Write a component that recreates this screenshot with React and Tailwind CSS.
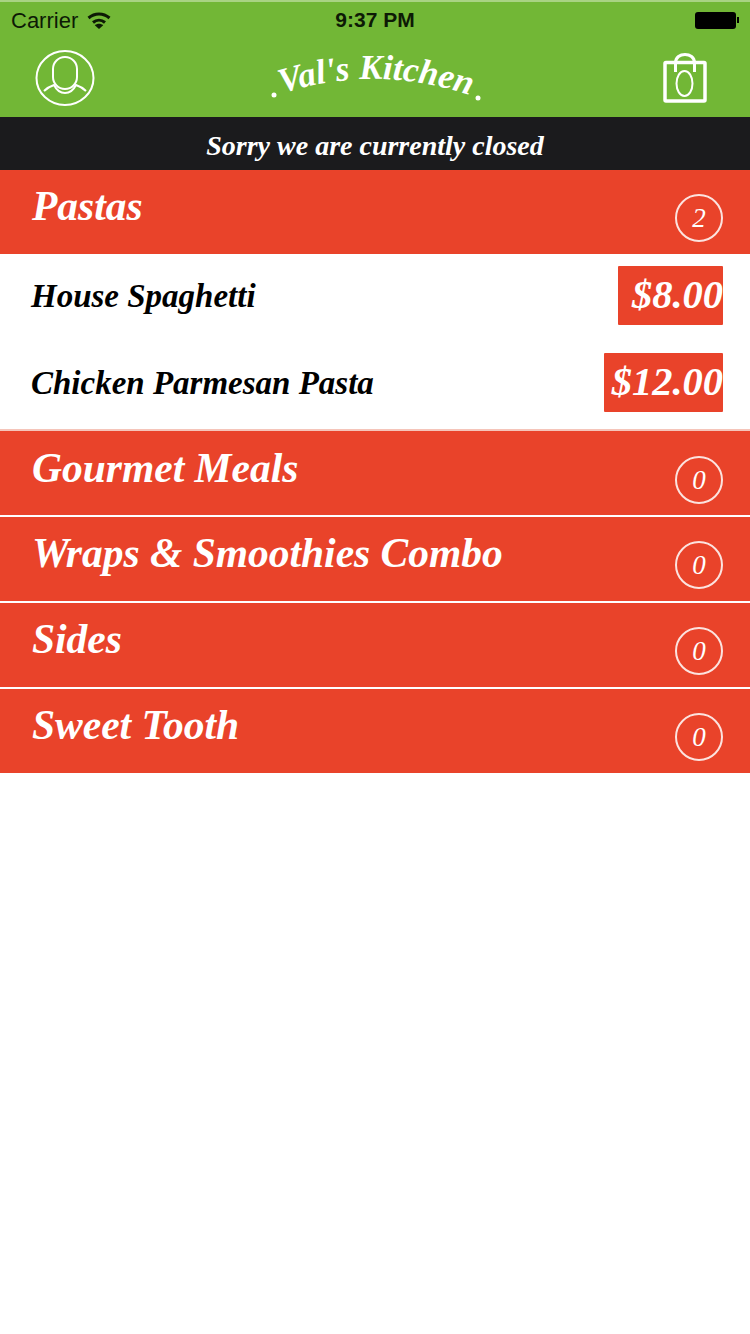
import React from 'react';

const scriptFont = "font-['Liberation_Serif',serif] italic font-bold";

const categories = [
  { name: 'Gourmet Meals', count: 0 },
  { name: 'Wraps & Smoothies Combo', count: 0 },
  { name: 'Sides', count: 0 },
  { name: 'Sweet Tooth', count: 0 },
];

const dishes = [
  { name: 'House Spaghetti', price: '$8.00', width: 'w-[105px]' },
  { name: 'Chicken Parmesan Pasta', price: '$12.00', width: 'w-[119px]' },
];

const WifiIcon = () => (
  <svg width="24" height="17" viewBox="0 0 24 17" fill="none" stroke="#0d1a05" strokeWidth="3">
    <path d="M1.5 6C7.8 0.6 16.2 0.6 22.5 6" />
    <path d="M6 10.5C9.6 7.4 14.4 7.4 18 10.5" />
    <path d="M12 17L7.8 13.2C10.2 11.2 13.8 11.2 16.2 13.2Z" fill="#0d1a05" stroke="none" />
  </svg>
);

const Battery = () => (
  <div className="flex items-center gap-px">
    <div className="w-[41px] h-[17px] bg-black rounded-[3px]" />
    <div className="w-[2px] h-[6px] bg-black" />
  </div>
);

const ProfileIcon = () => (
  <svg width="60" height="56" viewBox="0 0 60 56" fill="none" stroke="white" strokeWidth="2">
    <ellipse cx="30" cy="28" rx="28.5" ry="27" />
    <rect x="18" y="7" width="24" height="32" rx="12" />
    <path d="M9 41C12 38 16 36 19 35C22 41 26 43 30 43C34 43 38 41 41 35C44 36 48 38 51 41" />
  </svg>
);

const BagIcon = () => (
  <svg width="44" height="52" viewBox="0 0 44 52" fill="none" stroke="white">
    <rect x="2" y="10.5" width="40" height="38.5" rx="1" strokeWidth="3.5" />
    <path d="M12.5 20V11C12.5 -0.5 31.5 -0.5 31.5 11V20" strokeWidth="3" />
    <ellipse cx="21.5" cy="31.5" rx="8" ry="12.5" strokeWidth="2" />
  </svg>
);

const Logo = () => (
  <svg width="220" height="60" viewBox="0 0 220 60" className="font-['Liberation_Serif',serif]">
    <path id="logoArc" d="M8 47Q107 14 206 49" fill="none" />
    <text fill="white" fontSize="35" fontStyle="italic" fontWeight="700">
      <textPath href="#logoArc" startOffset="50%" textAnchor="middle">Val's Kitchen</textPath>
    </text>
    <circle cx="5" cy="47" r="2.5" fill="white" />
    <circle cx="209" cy="50" r="2.5" fill="white" />
  </svg>
);

const CountBadge = ({ count }) => (
  <div className="w-12 h-12 rounded-full border-2 border-white/85 flex items-center justify-center text-white text-[27px] font-['Liberation_Serif',serif] italic">
    {count}
  </div>
);

const CategoryRow = ({ name, count, className = '' }) => (
  <div className={`h-[84px] bg-[#e9432a] flex justify-between pl-8 pr-[27px] ${className}`}>
    <span className={`text-[41.5px] leading-none text-white mt-4 ${scriptFont}`}>{name}</span>
    <div className="mt-6">
      <CountBadge count={count} />
    </div>
  </div>
);

const App = () => {
  return (
    <div className="w-[750px] h-[1334px] bg-white overflow-hidden font-['Liberation_Sans',sans-serif]">
      <div className="h-[117px] bg-[#72b736] border-t-2 border-[#a9d383]">
        <div className="h-[36px] flex items-center justify-between px-[11px] text-[22px] text-[#0d1a05]">
          <div className="flex items-center gap-[9px] w-[200px]">
            <span>Carrier</span>
            <WifiIcon />
          </div>
          <span className="font-bold text-[21px]">9:37 PM</span>
          <div className="flex justify-end w-[200px]">
            <Battery />
          </div>
        </div>
        <div className="h-[79px] flex items-center justify-between pl-[35px] pr-[43px]">
          <ProfileIcon />
          <Logo />
          <BagIcon />
        </div>
      </div>

      <div className={`h-[53px] pt-1 bg-[#1b1b1d] flex items-center justify-center text-white text-[28px] ${scriptFont}`}>
        Sorry we are currently closed
      </div>

      <CategoryRow name="Pastas" count={2} />

      <div className="h-[177px] pt-3 border-b-2 border-[#f5c5ba]">
        {dishes.map((dish) => (
          <div key={dish.name} className="h-[87px] flex justify-between pl-[31px] pr-[27px]">
            <span className={`text-[33px] leading-none text-black mt-[14px] ${scriptFont}`}>{dish.name}</span>
            <div className={`${dish.width} h-[59px] bg-[#e9432a] rounded-[1px] flex items-center justify-end text-white text-[40.5px] ${scriptFont}`}>
              {dish.price}
            </div>
          </div>
        ))}
      </div>

      <div className="flex flex-col gap-[2px]">
        {categories.map((category, index) => (
          <CategoryRow
            key={category.name}
            name={category.name}
            count={category.count}
            className={index === 0 ? 'pt-px' : ''}
          />
        ))}
      </div>
    </div>
  );
};

export default App;
